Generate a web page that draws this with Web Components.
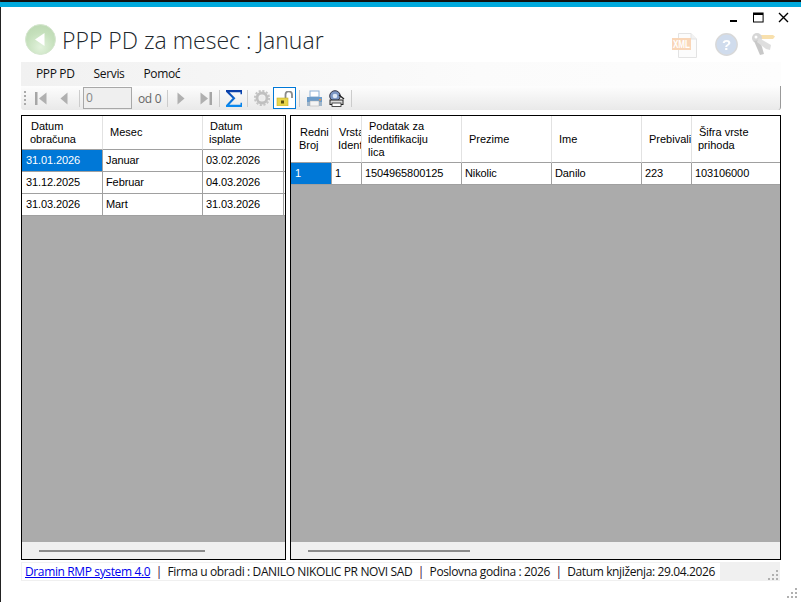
<!DOCTYPE html>
<html><head><meta charset="utf-8">
<style>
html,body{margin:0;padding:0;background:#fff}
body{width:801px;height:602px;overflow:hidden;font-family:"Liberation Sans",sans-serif}
</style></head><body>
<app-window>
  <title-bar title-text="PPP PD za mesec : Januar"></title-bar>
  <menu-strip>
    <span>PPP PD</span><span>Servis</span><span>Pomoć</span>
  </menu-strip>
  <tool-strip></tool-strip>
  <grid-row>
    <data-grid style="--w:265px;--cols:81px 100px 81px 1fr;--head:34px">
      <g-cell head f>Datum<br>obračuna</g-cell><g-cell head>Mesec</g-cell><g-cell head>Datum<br>isplate</g-cell><g-cell head last></g-cell>
      <g-cell sel f>31.01.2026</g-cell><g-cell>Januar</g-cell><g-cell>03.02.2026</g-cell><g-cell></g-cell>
      <g-cell f>31.12.2025</g-cell><g-cell>Februar</g-cell><g-cell>04.03.2026</g-cell><g-cell></g-cell>
      <g-cell f>31.03.2026</g-cell><g-cell>Mart</g-cell><g-cell>31.03.2026</g-cell><g-cell></g-cell>
      <span slot="thumb" style="display:block;width:166px"></span>
    </data-grid>
    <data-grid style="--w:491px;--cols:41px 30px 100px 90px 90px 50px 1fr;--head:47px">
      <g-cell head f>Redni<br>Broj</g-cell><g-cell head tight>Vrsta<br>Ident</g-cell><g-cell head>Podatak za<br>identifikaciju<br>lica</g-cell><g-cell head>Prezime</g-cell><g-cell head>Ime</g-cell><g-cell head>Prebivalište</g-cell><g-cell head last>Šifra vrste<br>prihoda</g-cell>
      <g-cell sel f>1</g-cell><g-cell>1</g-cell><g-cell>1504965800125</g-cell><g-cell>Nikolic</g-cell><g-cell>Danilo</g-cell><g-cell>223</g-cell><g-cell last>103106000</g-cell>
      <span slot="thumb" style="display:block;width:162px"></span>
    </data-grid>
  </grid-row>
  <status-strip></status-strip>
</app-window>
<script>
function def(name, css, html, extra){
  customElements.define(name, class extends HTMLElement{
    constructor(){super();this.attachShadow({mode:"open"}).innerHTML="<style>"+css+"</style>"+html;}
    connectedCallback(){if(extra)extra.call(this);}
  });
}
const nav={
 first:'<svg width="12" height="15" viewBox="0 0 12 15"><rect x="0" y="1" width="2.5" height="13" fill="#a6a6a6"/><path d="M11.5 1.5V13.5L4 7.5Z" fill="#b0b0b0"/></svg>',
 prev:'<svg width="8" height="15" viewBox="0 0 8 15"><path d="M7.5 1.5V13.5L.5 7.5Z" fill="#b0b0b0"/></svg>',
 next:'<svg width="8" height="15" viewBox="0 0 8 15"><path d="M.5 1.5V13.5L7.5 7.5Z" fill="#b0b0b0"/></svg>',
 last:'<svg width="12" height="15" viewBox="0 0 12 15"><rect x="9.5" y="1" width="2.5" height="13" fill="#a6a6a6"/><path d="M.5 1.5V13.5L8 7.5Z" fill="#b0b0b0"/></svg>'
};
def("app-window",`:host{display:flex;flex-direction:column;box-sizing:border-box;width:801px;height:602px;border-top:2px solid #111;border-left:1px solid #222;background:#fff}
.band{height:5px;background:#00a9dc;margin-left:-1px}
.in{display:flex;flex-direction:column;padding:0 20px}`,`<div class="band"></div><div class="in"><slot></slot></div>`);

def("title-bar",`:host{display:block;height:55px;position:relative;margin-right:-20px;color:#000}
.ctl{display:flex;justify-content:flex-end;height:17px;align-items:flex-start;padding:5px 12px 0 0;box-sizing:border-box;gap:14px}
.row{display:flex;height:38px;align-items:flex-start}
.back{margin:0 6px 0 4px;flex:none}
h1{margin:-3px 0 0;font:300 23px/38px "Open Sans",sans-serif;color:#20262b;white-space:nowrap;flex:1}
.ic{display:flex;align-items:flex-start;margin:9px 26px 0 0;opacity:.55}
`,`<div class="ctl">
<svg width="12" height="12" viewBox="0 0 12 12" style="margin-right:-2px"><rect x="1" y="8" width="7" height="2" fill="#000"/></svg>
<svg width="11" height="11" viewBox="0 0 11 11"><rect x=".5" y="1" width="9.6" height="9" fill="none" stroke="#000" stroke-width="1"/><rect x="1" y="1" width="9" height="2" fill="#000"/></svg>
<svg width="11" height="11" viewBox="0 0 11 11"><path d="M1 1L10 10M10 1L1 10" stroke="#000" stroke-width="1.4"/></svg>
</div>
<div class="row">
<svg class="back" width="31" height="31" viewBox="0 0 31 31"><defs><radialGradient id="g" cx=".5" cy=".75" r=".8"><stop offset="0" stop-color="#e2f2dc"/><stop offset=".6" stop-color="#c5e0bc"/><stop offset="1" stop-color="#bcd8b2"/></radialGradient></defs><circle cx="15.5" cy="15.5" r="15" fill="url(#g)" stroke="#d5e6cf"/><path d="M19.5 9V22L10 15.5Z" fill="#fff"/></svg>
<h1></h1>
<div class="ic">
<svg width="25" height="25" viewBox="0 0 25 25" style="margin-right:18px"><path d="M6.5 .5H19L24.5 6V24.5H6.5Z" fill="#fafafa" stroke="#ccc"/><path d="M19 .5V6H24.5" fill="#e8e8e8" stroke="#ccc"/><rect x="0" y="5" width="19" height="12" fill="#f5b57e"/><text x="9.5" y="14.5" font-family="Liberation Sans" font-weight="700" font-size="10" text-anchor="middle" fill="#fff" textLength="17" lengthAdjust="spacingAndGlyphs">XML</text></svg>
<svg width="23" height="23" viewBox="0 0 23 23" style="margin-right:13px"><circle cx="11.5" cy="11.5" r="10.7" fill="#a9c0df" stroke="#b9b9b9" stroke-width="1.4"/><text x="11.5" y="17" font-family="Liberation Sans" font-weight="700" font-size="15" text-anchor="middle" fill="#fff">?</text></svg>
<svg width="24" height="24" viewBox="0 0 24 24"><path d="M10 2H22L24 3.5L22 6H10Z" fill="#f2c76a"/><circle cx="6" cy="5" r="5" fill="#b4b4b4"/><path d="M3 8L9 22L13 21L9 7Z" fill="#9c9c9c"/><path d="M8 5L20 12L19 17L15 16L6 9Z" fill="#c4c4c4"/><circle cx="5" cy="4" r="1.5" fill="#fff"/></svg>
</div></div>`,function(){this.shadowRoot.querySelector("h1").textContent=this.getAttribute("title-text")});

def("menu-strip",`:host{display:flex;height:24px;background:linear-gradient(90deg,#f1f1f1,#fbfbfb 60%,#fdfdfd);padding:0 0 2px 15px;gap:19px;align-items:center;font:500 12px "Open Sans",sans-serif;color:#111;width:760px;box-sizing:border-box}
::slotted(span){letter-spacing:-.35px}`,`<slot></slot>`);

def("tool-strip",`:host{display:flex;align-items:center;height:24px;width:760px;box-sizing:border-box;background:linear-gradient(#fdfdfd,#f4f4f4 45%,#e9e9e9);border-right:1px solid #999;border-radius:0 0 3px 3px;font:12px "Open Sans",sans-serif;color:#666}
.grip{width:2px;height:14px;margin-left:3px;background:repeating-linear-gradient(#aaa 0 2px,transparent 2px 4px)}
.sep{width:1px;height:17px;background:#ccc;flex:none}
.b{display:flex;flex:none;align-items:center;justify-content:center;height:24px}
.box{box-sizing:border-box;width:49px;height:22px;border:1px solid #a8a8a8;background:#efefef;margin:0 0 0 3px;padding:1px 0 0 2px;color:#888;font:12px/18px "Open Sans",sans-serif}
.lock{box-sizing:border-box;width:23px;border:1px solid #0078d7;background:#fff;margin-left:2px;margin-right:3px}
`,`<div class="grip"></div>
<div class="b" style="margin-left:8px;width:14px">${nav.first}</div>
<div class="b" style="margin-left:10px;width:11px">${nav.prev}</div>
<div class="sep" style="margin-left:10px"></div>
<div class="box">0</div>
<div style="margin-left:6px;width:24px;letter-spacing:-.35px;white-space:nowrap;flex:none">od 0</div>
<div class="sep" style="margin-left:5px"></div>
<div class="b" style="margin-left:8px;width:10px">${nav.next}</div>
<div class="b" style="margin-left:13px;width:13px">${nav.last}</div>
<div class="sep" style="margin-left:7px"></div>
<div class="b" style="margin-left:6px;width:16px"><svg width="16" height="17" viewBox="0 0 17 18"><defs><linearGradient id="s" x1="0" x2="0" y1="0" y2="1"><stop offset="0" stop-color="#0a3ea8"/><stop offset="1" stop-color="#0a8af0"/></linearGradient></defs><path d="M16.5 4.6V1.2H1L8.5 8.8L1 16.8H16.5V13.4" fill="none" stroke="url(#s)" stroke-width="2.2"/></svg></div>
<div class="sep" style="margin-left:5px"></div>
<div class="b" style="margin-left:5px;width:18px"><svg width="16" height="16" viewBox="0 0 18 18"><circle cx="9" cy="9" r="5.6" fill="none" stroke="#c0c0c0" stroke-width="3.2"/><circle cx="9" cy="9" r="8" fill="none" stroke="#c4c4c4" stroke-width="2.2" stroke-dasharray="2.4 1.8"/><circle cx="9" cy="9" r="3" fill="#ececec"/></svg></div>
<div class="b lock" style="height:22px"><svg width="18" height="15" viewBox="0 0 18 15"><path d="M9.5 7V3.5A3.2 3.2 0 0 1 16 3.5V7" fill="none" stroke="#8a8a8a" stroke-width="1.8"/><rect x="1" y="7" width="11" height="8" fill="#e8d44a" stroke="#c4ae2c" stroke-width=".6"/><rect x="5" y="9.5" width="3" height="3" fill="#5a5210"/></svg></div>
<div class="sep"></div>
<div class="b" style="margin-left:6px;width:17px"><svg width="17" height="17" viewBox="0 0 17 17"><rect x="4" y="1" width="9" height="6" fill="#fff" stroke="#8fb2d5"/><path d="M1 7H16V13H1Z" fill="#6d9cc9"/><rect x="1" y="12" width="15" height="4" fill="#9fb6cb"/><rect x="4" y="11" width="9" height="5" fill="#f4f4f4" stroke="#aaa" stroke-width=".5"/><rect x="13" y="9" width="2" height="1.5" fill="#e89a50"/></svg></div>
<div class="b" style="margin-left:5px;width:17px"><svg width="17" height="17" viewBox="0 0 17 17"><circle cx="7" cy="6" r="5.3" fill="#7d97c4" stroke="#334" stroke-width="1"/><circle cx="7" cy="6" r="2.3" fill="#dfe8f5"/><rect x="2" y="10" width="13" height="4.5" fill="#ddd" stroke="#222"/><rect x="4" y="13" width="9" height="3.5" fill="#fff" stroke="#222" stroke-width=".8"/><path d="M11 5L16 9" stroke="#222" stroke-width="1.4"/></svg></div>
<div class="sep" style="margin-left:6px"></div>`);

def("grid-row",`:host{display:flex;gap:4px;margin-top:5px;height:445px}`,`<slot></slot>`);

def("data-grid",`:host{display:flex;flex-direction:column;box-sizing:border-box;width:var(--w);height:445px;border:1px solid #000;background:#ababab;overflow:hidden}
.g{display:grid;grid-template-columns:var(--cols);grid-template-rows:var(--head);grid-auto-rows:22px;background:#ababab}
.fill{flex:1}
.sb{height:17px;background:#f0f0f0;padding:8px 0 0 17px;box-sizing:border-box;flex:none}
::slotted([slot=thumb]){height:2px;background:#8a8a8a;margin-left:0}`,
`<div class="g"><slot></slot></div><div class="fill"></div><div class="sb"><slot name="thumb"></slot></div>`);

def("g-cell",`:host{display:flex;align-items:center;box-sizing:border-box;background:#fff;border-right:1px solid #a0a0a0;border-bottom:1px solid #a0a0a0;font:11px/13px "Liberation Sans",sans-serif;letter-spacing:-.1px;color:#000;padding-left:3px;overflow:hidden;white-space:nowrap;min-width:0}
:host([f]){padding-left:4px}
:host([head]){padding-left:6px;letter-spacing:0;border-right-color:#e2e2e2;border-bottom-color:#a0a0a0;line-height:13px}
:host([head][f]){padding-left:8px}
:host([head]) div{text-indent:1px}
:host([sel]){background:#0078d7;color:#fff}
:host([last]){border-right:0}`,`<div><slot></slot></div>`);

def("status-strip",`:host{display:flex;align-items:center;position:relative;box-sizing:border-box;height:19px;margin-top:2px;width:759px;background:#f0f0f0;font:12px "Open Sans",sans-serif;color:#111}
.t{background:#fff;height:17px;line-height:17px;padding-left:3px;width:698px;white-space:nowrap;overflow:hidden;letter-spacing:-.37px;box-sizing:border-box;margin-left:1px}
a{color:#0000ee;text-decoration:underline}
i{font-style:normal;color:#303;margin:0 5.5px}
.grip{margin-left:auto;margin-right:2px;margin-top:6px}
.corner{position:absolute;left:766px;top:26px}`,`<div class="t"><a href="#">Dramin RMP system 4.0</a><i>|</i>Firma u obradi : DANILO NIKOLIC PR NOVI SAD<i>|</i>Poslovna godina : 2026<i>|</i>Datum knjiženja: 29.04.2026</div>
<svg class="grip" width="10" height="10" viewBox="0 0 10 10" fill="#b0b0b0"><rect x="8" y="0" width="2" height="2"/><rect x="4" y="4" width="2" height="2"/><rect x="8" y="4" width="2" height="2"/><rect x="0" y="8" width="2" height="2"/><rect x="4" y="8" width="2" height="2"/><rect x="8" y="8" width="2" height="2"/></svg>
<svg class="corner" width="10" height="10" viewBox="0 0 10 10" fill="#b0b0b0"><rect x="8" y="0" width="2" height="2"/><rect x="4" y="4" width="2" height="2"/><rect x="8" y="4" width="2" height="2"/><rect x="0" y="8" width="2" height="2"/><rect x="4" y="8" width="2" height="2"/><rect x="8" y="8" width="2" height="2"/></svg>`);
</script>
</body></html>
